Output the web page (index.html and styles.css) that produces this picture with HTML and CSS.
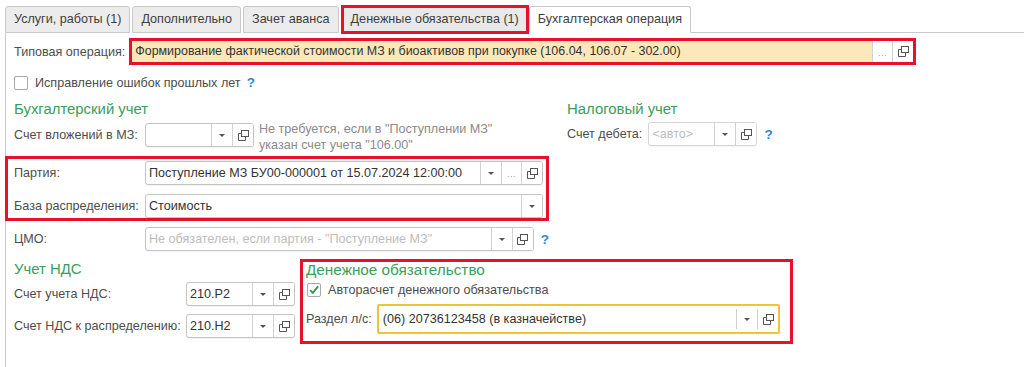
FILE: index.html
```html
<!DOCTYPE html>
<html lang="ru">
<head>
<meta charset="utf-8">
<title>Бухгалтерская операция</title>
<link rel="stylesheet" href="styles.css">
</head>
<body>
<div class="tabs">
  <div class="tab">Услуги, работы (1)</div>
  <div class="tab">Дополнительно</div>
  <div class="tab">Зачет аванса</div>
  <div class="tab tab-marked">Денежные обязательства (1)</div>
  <div class="tab tab-active">Бухгалтерская операция</div>
  <div class="tab-fill"></div>
</div>
<div class="panel">
  <div class="row">
    <span class="label-typop">Типовая операция:</span>
    <div class="typop">
      <span class="typop-val">Формирование фактической стоимости МЗ и биоактивов при покупке (106.04, 106.07 - 302.00)</span>
      <span class="btn btn-dots">...</span>
      <span class="btn"><svg class="ico-open" viewBox="0 0 11 11"><rect x="3.5" y="0.5" width="7" height="6"/><path d="M3.5 3.5H0.5V10.5H7.5V6.5"/></svg></span>
    </div>
  </div>
  <div class="row check-row">
    <span class="checkbox"></span>
    <span class="check-text">Исправление ошибок прошлых лет</span>
    <span class="help">?</span>
  </div>

  <div class="sections">
    <div class="col-buh">
      <div class="heading heading-pad">Бухгалтерский учет</div>
      <div class="row row-vlozh">
        <span class="label label-buh">Счет вложений в МЗ:</span>
        <div class="field field-short">
          <span class="field-val"></span>
          <span class="btn"><span class="arrow"></span></span>
          <span class="btn"><svg class="ico-open" viewBox="0 0 11 11"><rect x="3.5" y="0.5" width="7" height="6"/><path d="M3.5 3.5H0.5V10.5H7.5V6.5"/></svg></span>
        </div>
        <div class="note">Не требуется, если в "Поступлении МЗ"<br>указан счет учета "106.00"</div>
      </div>
      <div class="redgroup">
        <div class="row row-in">
          <span class="label label-buh">Партия:</span>
          <div class="field field-wide">
            <span class="field-val">Поступление МЗ БУ00-000001 от 15.07.2024 12:00:00</span>
            <span class="btn"><span class="arrow"></span></span>
            <span class="btn btn-dots">...</span>
            <span class="btn"><svg class="ico-open" viewBox="0 0 11 11"><rect x="3.5" y="0.5" width="7" height="6"/><path d="M3.5 3.5H0.5V10.5H7.5V6.5"/></svg></span>
          </div>
        </div>
        <div class="row row-in row-gap">
          <span class="label label-buh">База распределения:</span>
          <div class="field field-wide">
            <span class="field-val">Стоимость</span>
            <span class="btn"><span class="arrow"></span></span>
          </div>
        </div>
      </div>
      <div class="row row-cmo">
        <span class="label label-buh">ЦМО:</span>
        <div class="field field-wide">
          <span class="field-val placeholder">Не обязателен, если партия - "Поступление МЗ"</span>
          <span class="btn"><span class="arrow"></span></span>
          <span class="btn"><svg class="ico-open" viewBox="0 0 11 11"><rect x="3.5" y="0.5" width="7" height="6"/><path d="M3.5 3.5H0.5V10.5H7.5V6.5"/></svg></span>
        </div>
        <span class="help help-field">?</span>
      </div>
    </div>

    <div class="col-nal">
      <div class="heading">Налоговый учет</div>
      <div class="row row-nal">
        <span class="label label-nal">Счет дебета:</span>
        <div class="field field-short field-dim">
          <span class="field-val placeholder">&lt;авто&gt;</span>
          <span class="btn"><span class="arrow"></span></span>
          <span class="btn"><svg class="ico-open" viewBox="0 0 11 11"><rect x="3.5" y="0.5" width="7" height="6"/><path d="M3.5 3.5H0.5V10.5H7.5V6.5"/></svg></span>
        </div>
        <span class="help help-field">?</span>
      </div>
    </div>
  </div>

  <div class="bottom">
    <div class="col-nds">
      <div class="heading heading-nds">Учет НДС</div>
      <div class="row row-nds1">
        <span class="label label-nds">Счет учета НДС:</span>
        <div class="field field-short">
          <span class="field-val">210.Р2</span>
          <span class="btn"><span class="arrow"></span></span>
          <span class="btn"><svg class="ico-open" viewBox="0 0 11 11"><rect x="3.5" y="0.5" width="7" height="6"/><path d="M3.5 3.5H0.5V10.5H7.5V6.5"/></svg></span>
        </div>
      </div>
      <div class="row row-nds2">
        <span class="label label-nds">Счет НДС к распределению:</span>
        <div class="field field-short">
          <span class="field-val">210.Н2</span>
          <span class="btn"><span class="arrow"></span></span>
          <span class="btn"><svg class="ico-open" viewBox="0 0 11 11"><rect x="3.5" y="0.5" width="7" height="6"/><path d="M3.5 3.5H0.5V10.5H7.5V6.5"/></svg></span>
        </div>
      </div>
    </div>

    <div class="redbox-money">
      <div class="heading heading-money">Денежное обязательство</div>
      <div class="money-check">
        <span class="checkbox checked"><svg viewBox="0 0 14 14"><path d="M2.5 7.2L5.6 10.3L11.8 2.8"/></svg></span>
        <span class="check-text">Авторасчет денежного обязательства</span>
      </div>
      <div class="money-row">
        <span class="label label-money">Раздел л/с:</span>
        <div class="field field-yellow">
          <span class="field-val">(06) 20736123458 (в казначействе)</span>
          <span class="btn btn-short"><span class="arrow"></span></span>
          <span class="btn btn-short"><svg class="ico-open" viewBox="0 0 11 11"><rect x="3.5" y="0.5" width="7" height="6"/><path d="M3.5 3.5H0.5V10.5H7.5V6.5"/></svg></span>
        </div>
      </div>
    </div>
  </div>
</div>
</body>
</html>
```

FILE: styles.css
```css
html, body {
  margin: 0;
  padding: 0;
}
body {
  width: 1024px;
  height: 367px;
  overflow: hidden;
  background: #ffffff;
  font-family: "Liberation Sans", Arial, sans-serif;
  font-size: 12.6px;
  color: #4d4d4d;
}

/* tabs */
.tabs {
  display: flex;
  align-items: flex-end;
  height: 33px;
  padding-left: 5px;
  box-sizing: border-box;
}
.tab {
  height: 27px;
  box-sizing: border-box;
  border: 1px solid #c8c8c8;
  border-radius: 3px 3px 0 0;
  background: #ececec;
  padding: 0 8px;
  line-height: 25px;
  margin-right: 2px;
  color: #404040;
  white-space: nowrap;
}
.tab-marked {
  height: 29px;
  margin-bottom: -1px;
  border: 3px solid #e8112d;
  border-radius: 0;
  padding: 0 7px;
  line-height: 23px;
  margin-right: 0;
  background: #e9e9e9;
}
.tab-active {
  background: #ffffff;
  border-bottom-color: #ffffff;
  margin-right: 0;
  padding: 0 8px;
}
.tab-fill {
  flex: 1;
  border-bottom: 1px solid #c8c8c8;
}

/* panel */
.panel {
  margin-left: 5px;
  border-left: 1px solid #c8c8c8;
  height: 334px;
  box-sizing: border-box;
  padding-top: 5px;
}
.row {
  display: flex;
  align-items: center;
  padding-left: 8px;
}
.label-typop {
  margin-right: 4px;
  white-space: nowrap;
}
.typop {
  width: 787px;
  height: 27px;
  box-sizing: border-box;
  border: 3px solid #e8112d;
  display: flex;
  background: #fde8b9;
}
.typop-val {
  flex: 1;
  padding-left: 3px;
  line-height: 21px;
  font-size: 12.45px;
  color: #333333;
  white-space: nowrap;
  overflow: hidden;
}
.btn {
  width: 20px;
  flex: none;
  border-left: 1px solid #d2d2d2;
  display: flex;
  align-items: center;
  justify-content: center;
  background: #ffffff;
}
.btn-dots {
  color: #a0a0a0;
  font-size: 9px;
  letter-spacing: 0.5px;
  padding-top: 2px;
  box-sizing: border-box;
}
.ico-open {
  width: 11px;
  height: 11px;
  fill: none;
  stroke: #555555;
  stroke-width: 1;
}
.arrow {
  width: 0;
  height: 0;
  border-left: 3px solid transparent;
  border-right: 3px solid transparent;
  border-top: 3px solid #555555;
}

/* checkbox */
.check-row {
  margin-top: 10px;
}
.checkbox {
  width: 14px;
  height: 14px;
  box-sizing: border-box;
  border: 1px solid #a8a8a8;
  border-radius: 2px;
  background: #ffffff;
  flex: none;
  display: flex;
}
.checkbox svg {
  width: 14px;
  height: 14px;
  margin: -1px 0 0 0;
  fill: none;
  stroke: #2f9a46;
  stroke-width: 2.2;
}
.check-text {
  margin-left: 7px;
  color: #4d4d4d;
}
.help {
  margin-left: 6px;
  color: #2d8ad6;
  font-weight: bold;
  font-size: 13.5px;
}
.help-field {
  margin-left: 7px;
}

/* sections */
.sections {
  display: flex;
  margin-top: 10px;
}
.col-buh {
  width: 543px;
  flex: none;
}
.col-nal {
  margin-left: 18px;
}
.heading {
  font-size: 14.9px;
  line-height: 18px;
  color: #3a9e5c;
  white-space: nowrap;
}
.heading-pad {
  padding-left: 8px;
}
.label {
  flex: none;
  white-space: nowrap;
}
.label-buh {
  width: 131px;
}
.row-vlozh {
  margin-top: 3px;
  align-items: flex-start;
}
.row-vlozh .label {
  line-height: 24px;
  margin-top: 2px;
}
.row-vlozh .field {
  margin-top: 2px;
}
.note {
  margin-left: 5px;
  line-height: 16px;
  color: #8a8a8a;
  white-space: nowrap;
}

.field {
  display: flex;
  height: 24px;
  box-sizing: border-box;
  border: 1px solid #c4c4c4;
  border-radius: 3px;
  background: #ffffff;
  box-shadow: 0 1px 1px rgba(0, 0, 0, 0.05);
  overflow: hidden;
}
.field-val {
  flex: 1;
  padding: 0 3px;
  line-height: 22px;
  color: #333333;
  white-space: nowrap;
  overflow: hidden;
}
.placeholder {
  color: #bdbdbd;
}
.field-short {
  width: 109px;
}
.field-wide {
  width: 398px;
}
.field-dim {
  border-color: #d6d6d6;
}

.redgroup {
  margin-top: 3px;
  margin-left: -1px;
  width: 544px;
  box-sizing: border-box;
  border: 3px solid #e8112d;
  padding: 2px 3px 0 6px;
}
.row-in {
  padding-left: 0;
}
.row-gap {
  margin-top: 9px;
}
.row-cmo {
  margin-top: 6px;
}

.row-nal {
  margin-top: 4px;
  padding-left: 0;
}
.label-nal {
  margin-right: 6px;
}

/* bottom */
.bottom {
  display: flex;
  margin-top: 8px;
  align-items: flex-start;
}
.col-nds {
  width: 290px;
  flex: none;
  padding-left: 8px;
  box-sizing: border-box;
}
.heading-nds {
  margin-top: 1px;
}
.col-nds .row {
  padding-left: 0;
}
.label-nds {
  width: 172px;
}
.row-nds1 {
  margin-top: 4px;
}
.row-nds2 {
  margin-top: 8px;
}

.redbox-money {
  margin-left: 4px;
  width: 493px;
  box-sizing: border-box;
  border: 3px solid #e8112d;
  padding: 0 10px 7px 3px;
}
.heading-money {
  line-height: 16px;
  font-size: 15.3px;
}
.money-check {
  display: flex;
  align-items: center;
  margin-top: 5px;
  padding-left: 1px;
}
.money-row {
  display: flex;
  align-items: center;
  margin-top: 7px;
}
.label-money {
  margin-right: 5px;
}
.field-yellow {
  flex: 1;
  height: 30px;
  border: 2px solid #f3c13a;
  border-radius: 2px;
  box-shadow: none;
}
.field-yellow .field-val {
  line-height: 26px;
  padding-left: 4px;
}
.btn-short {
  margin: 3px 0;
}
```
